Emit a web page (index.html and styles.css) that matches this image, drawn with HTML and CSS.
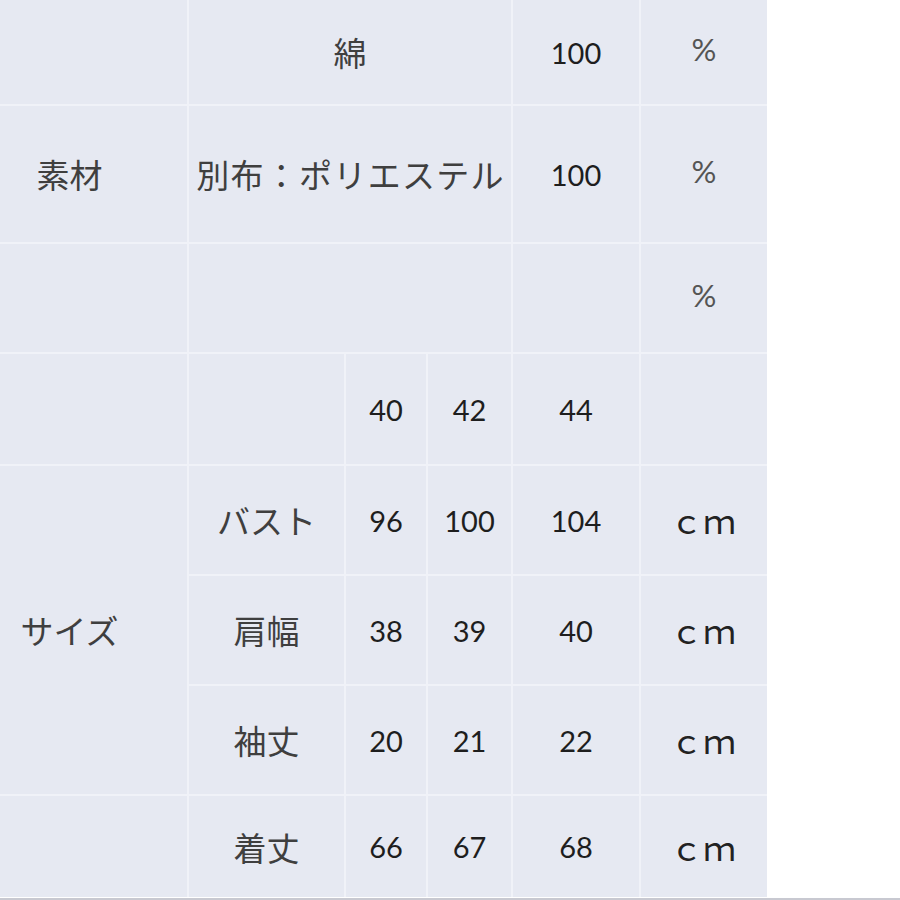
FILE: index.html
```html
<!DOCTYPE html>
<html lang="ja">
<head>
<meta charset="utf-8">
<title>素材・サイズ</title>
<link rel="stylesheet" href="styles.css">
</head>
<body>
<div class="page">
  <div class="sheet">
    <div class="cell c1"></div>
    <div class="cell wide jp">綿</div>
    <div class="cell num">100</div>
    <div class="cell pct">%</div>

    <div class="cell c1 jp">素材</div>
    <div class="cell wide jp spaced">別布：ポリエステル</div>
    <div class="cell num">100</div>
    <div class="cell pct">%</div>

    <div class="cell c1"></div>
    <div class="cell wide"></div>
    <div class="cell"></div>
    <div class="cell pct">%</div>

    <div class="cell c1"></div>
    <div class="cell"></div>
    <div class="cell num">40</div>
    <div class="cell num">42</div>
    <div class="cell num">44</div>
    <div class="cell"></div>

    <div class="cell c1 jp size">サイズ</div>
    <div class="cell jp">バスト</div>
    <div class="cell num">96</div>
    <div class="cell num">100</div>
    <div class="cell num">104</div>
    <div class="cell unit">ｃｍ</div>

    <div class="cell jp">肩幅</div>
    <div class="cell num">38</div>
    <div class="cell num">39</div>
    <div class="cell num">40</div>
    <div class="cell unit">ｃｍ</div>

    <div class="cell jp">袖丈</div>
    <div class="cell num">20</div>
    <div class="cell num">21</div>
    <div class="cell num">22</div>
    <div class="cell unit">ｃｍ</div>

    <div class="cell c1"></div>
    <div class="cell jp">着丈</div>
    <div class="cell num">66</div>
    <div class="cell num">67</div>
    <div class="cell num">68</div>
    <div class="cell unit">ｃｍ</div>
  </div>
</div>
</body>
</html>
```

FILE: styles.css
```css
html, body {
  margin: 0;
  padding: 0;
  background: #ffffff;
}

.page {
  width: 900px;
  height: 898px;
  border-bottom: 2px solid #c8c9d1;
  background: #ffffff;
  overflow: hidden;
}

.sheet {
  display: grid;
  width: 767px;
  grid-template-columns: 187px 155px 80px 83px 126px 126px;
  grid-template-rows: 104px 136px 108px 110px 108px 108px 108px 101px;
  gap: 2px;
  background: #f0f2f8;
}

.cell {
  background: #e6e9f2;
  display: flex;
  align-items: center;
  justify-content: center;
  font-family: "Noto Sans CJK JP", sans-serif;
  font-size: 33px;
  color: #3d3d3d;
  white-space: nowrap;
}

.c1 {
  grid-column: 1;
  padding-right: 48px;
}

.wide {
  grid-column: 2 / span 3;
}

.size {
  grid-row: 5 / span 3;
}

.jp {
  font-family: "Noto Sans CJK JP", sans-serif;
  color: #3f3f3f;
}

.spaced {
  letter-spacing: 1.3px;
  padding-left: 1px;
}

.num {
  font-family: Lato, "Open Sans", sans-serif;
  font-size: 29px;
  color: #1e1e1e;
}

.pct {
  font-family: Lato, "Open Sans", sans-serif;
  font-size: 31px;
  color: #555555;
  padding-bottom: 6px;
}

.unit {
  font-family: "Noto Sans CJK JP", sans-serif;
  font-size: 33px;
  color: #222222;
  padding-right: 2px;
}
```
